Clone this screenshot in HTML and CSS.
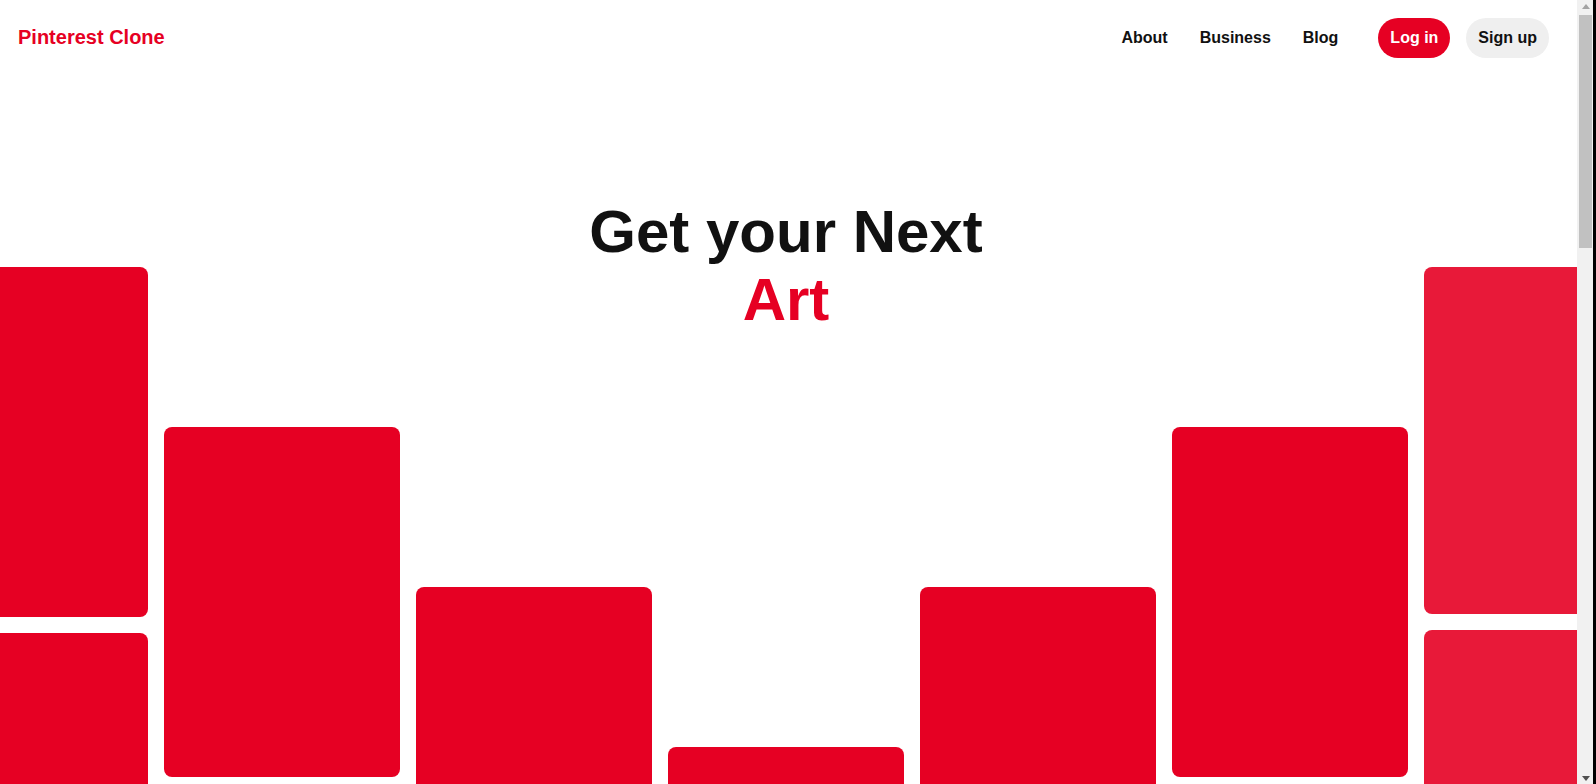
FILE: index.html
```html
<!DOCTYPE html>
<html lang="en">
<head>
<meta charset="utf-8">
<title>Pinterest Clone</title>
<link rel="stylesheet" href="styles.css">
</head>
<body>
<div class="page">
  <header class="header">
    <a class="logo" href="#">Pinterest Clone</a>
    <nav class="nav">
      <div class="nav__links">
        <a class="nav__link" href="#">About</a>
        <a class="nav__link" href="#">Business</a>
        <a class="nav__link" href="#">Blog</a>
      </div>
      <div class="nav__actions">
        <a class="btn btn--primary" href="#">Log in</a>
        <a class="btn btn--secondary" href="#">Sign up</a>
      </div>
    </nav>
  </header>
  <main class="hero">
    <h1 class="title">Get your Next<span class="title__accent">Art</span></h1>
    <div class="masonry">
      <div class="col col--0"><div class="card"></div><div class="card"></div><div class="card"></div><div class="card"></div><div class="card"></div><div class="card"></div></div>
      <div class="col col--1"><div class="card"></div><div class="card"></div><div class="card"></div><div class="card"></div><div class="card"></div><div class="card"></div></div>
      <div class="col col--2"><div class="card"></div><div class="card"></div><div class="card"></div><div class="card"></div><div class="card"></div><div class="card"></div></div>
      <div class="col col--3"><div class="card"></div><div class="card"></div><div class="card"></div><div class="card"></div><div class="card"></div><div class="card"></div></div>
      <div class="col col--2"><div class="card"></div><div class="card"></div><div class="card"></div><div class="card"></div><div class="card"></div><div class="card"></div></div>
      <div class="col col--1"><div class="card"></div><div class="card"></div><div class="card"></div><div class="card"></div><div class="card"></div><div class="card"></div></div>
      <div class="col col--0 col--fade"><div class="card"></div><div class="card"></div><div class="card"></div><div class="card"></div><div class="card"></div><div class="card"></div></div>
    </div>
  </main>
</div>
<div class="scrollbar" aria-hidden="true">
  <svg class="scrollbar__arrow scrollbar__arrow--up" width="8" height="5" viewBox="0 0 8 5"><path d="M0 5 L4 0 L8 5 Z"/></svg>
  <div class="scrollbar__thumb"></div>
  <div class="scrollbar__space"></div>
  <svg class="scrollbar__arrow scrollbar__arrow--down" width="8" height="5" viewBox="0 0 8 5"><path d="M0 0 L8 0 L4 5 Z"/></svg>
</div>
</body>
</html>
```
FILE: styles.css
```css
* { box-sizing: border-box; }

html, body {
  margin: 0;
  padding: 0;
}

body {
  display: flex;
  align-items: flex-start;
  font-family: "Liberation Sans", Arial, Helvetica, sans-serif;
  color: #111;
  background: #fff;
}

a { text-decoration: none; color: inherit; }

.page {
  flex: 1;
  min-width: 0;
}

.header {
  height: 75px;
  display: flex;
  align-items: center;
  justify-content: space-between;
  padding: 0 28px 0 18px;
}

.logo {
  font-size: 20px;
  font-weight: 700;
  color: #e60023;
}

.nav {
  display: flex;
  align-items: center;
}

.nav__links {
  display: flex;
  align-items: center;
  gap: 32px;
}

.nav__link {
  font-size: 16px;
  font-weight: 700;
  color: #111;
}

.nav__actions {
  display: flex;
  align-items: center;
  gap: 16px;
  margin-left: 40px;
}

.btn {
  height: 40px;
  padding: 0 12px;
  border-radius: 24px;
  display: flex;
  align-items: center;
  font-size: 16px;
  font-weight: 700;
}

.btn--primary {
  background: #e60023;
  color: #fff;
}

.btn--secondary {
  background: #efefef;
  color: #111;
}

.hero {
  display: grid;
  grid-template-columns: minmax(0, 1fr);
  height: 2465px;
  overflow: hidden;
  padding-right: 5px;
}

.title {
  grid-area: 1 / 1;
  align-self: start;
  justify-self: center;
  margin: 123px 0 0;
  font-size: 60px;
  line-height: 68px;
  font-weight: 700;
  text-align: center;
  color: #111;
  position: relative;
  z-index: 1;
}

.title__accent {
  display: block;
  color: #e60023;
}

.masonry {
  grid-area: 1 / 1;
  align-self: start;
  min-width: 0;
  margin-top: 192px;
  display: flex;
  justify-content: center;
  align-items: flex-start;
  gap: 16px;
}

.col {
  flex: none;
  width: 236px;
  display: flex;
  flex-direction: column;
  gap: 16px;
}

.col--0 { padding-top: 0; }
.col--1 { padding-top: 160px; }
.col--2 { padding-top: 320px; }
.col--3 { padding-top: 480px; }

.card {
  height: 350px;
  border-radius: 8px;
  background: #e60023;
}

.col--fade .card {
  height: 347px;
  opacity: 0.9;
}

/* window scrollbar as seen in the capture */
.scrollbar {
  flex: none;
  width: 19px;
  height: 100vh;
  position: sticky;
  top: 0;
  display: flex;
  flex-direction: column;
  background: #f1f1f1;
  border-right: 3px solid #000;
}

.scrollbar__arrow {
  flex: none;
  margin: 4px 0 0 5px;
}

.scrollbar__arrow--up { fill: #a3a3a3; margin-bottom: 6px; }

.scrollbar__arrow--down { fill: #505050; margin-bottom: 3px; }

.scrollbar__thumb {
  flex: none;
  height: 233px;
  margin: 0 1px 0 2px;
  background: #c1c1c1;
}

.scrollbar__space {
  flex: 1;
}
```
